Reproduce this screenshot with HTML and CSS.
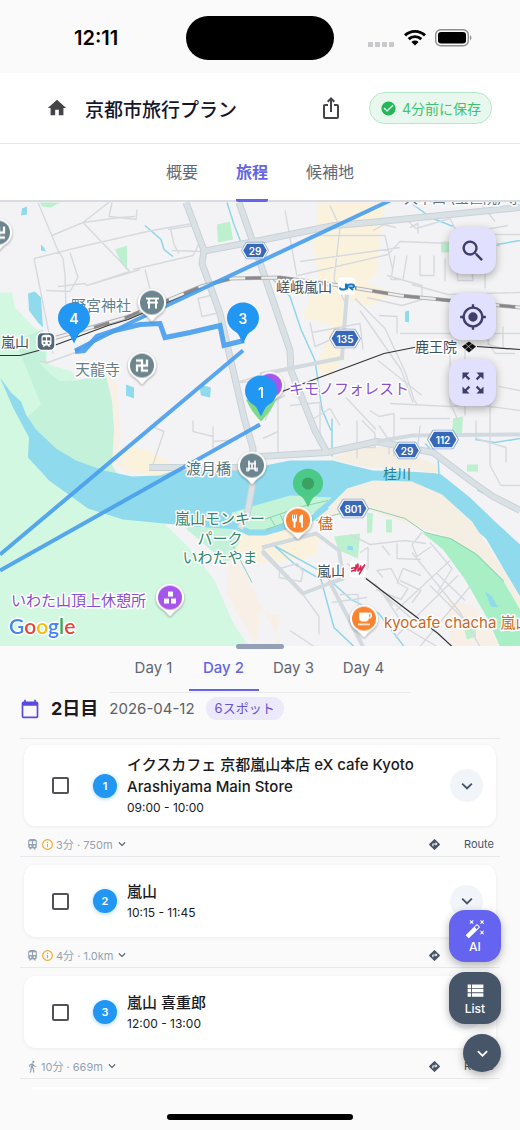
FILE: index.html
```html
<!DOCTYPE html>
<html lang="ja">
<head>
    <meta charset="UTF-8">
    <meta name="viewport" content="width=device-width, initial-scale=1.0">
    <title>京都市旅行プラン</title>
    <link rel="stylesheet" href="styles.css">
</head>
<body>
<!-- Shared icons -->
<svg class="sprite" aria-hidden="true">
    <symbol id="chevron" viewBox="0 0 24 24"><path d="M7.4 8.6 12 13.2l4.600-4.600L18 10l-6 6-6-6z"/></symbol>
    <symbol id="train" viewBox="0 0 24 24"><path fill-rule="evenodd" d="M12 2C7 2 4 2.600 4 6v9.500C4 17.400 5.600 19 7.500 19L6 20.500V21h2.500l2-2h3l2 2H18v-.5L16.500 19c1.900 0 3.500-1.600 3.500-3.500V6c0-3.400-3-4-8-4zM6 6v5h5V6zm7 0v5h5V6zM8.500 13.500a1.600 1.600 0 1 0 0 3.200 1.600 1.600 0 0 0 0-3.200zm7 0a1.600 1.600 0 1 0 0 3.200 1.600 1.600 0 0 0 0-3.200z"/></symbol>
    <symbol id="info" viewBox="0 0 24 24"><path fill-rule="evenodd" d="M12 2a10 10 0 1 0 0 20 10 10 0 0 0 0-20zm0 2a8 8 0 1 1 0 16 8 8 0 0 1 0-16zM11 7h2v2h-2zm0 4h2v6h-2z"/></symbol>
    <symbol id="walk" viewBox="0 0 24 24"><path d="M13.500 5.500a2 2 0 1 0 0-4 2 2 0 0 0 0 4zM9.800 8.900 7 23h2.100l1.800-8 2.100 2v6h2v-7.500l-2.100-2 .6-3C14.800 12 16.800 13 19 13v-2c-1.900 0-3.500-1-4.300-2.400l-1-1.600c-.4-.6-1-1-1.700-1-.3 0-.5.100-.8.100L6 8.300V13h2V9.600z"/></symbol>
    <symbol id="directions" viewBox="0 0 24 24"><path fill-rule="evenodd" d="m21.700 11.300-9-9a1 1 0 0 0-1.400 0l-9 9a1 1 0 0 0 0 1.400l9 9a1 1 0 0 0 1.400 0l9-9a1 1 0 0 0 0-1.400zM14 14.500V12h-4v3H8v-4a1 1 0 0 1 1-1h5V7.500l3.500 3.500z"/></symbol>
    <symbol id="pin" viewBox="0 0 34 44"><path d="M17 1C8 1 1 8 1 16.500c0 7 4.500 11.500 9.500 14.500 2.500 2 4 6 6.500 11 2.500-5 4-9 6.500-11 5-3 9.500-7.500 9.500-14.500C33 8 26 1 17 1z"/></symbol>
    <symbol id="poi" viewBox="0 0 32 36"><path fill="#fff" d="M16 1A14 14 0 0 0 6 25c3 2 6 4 8 7q2 3 4 0c2-3 5-5 8-7A14 14 0 0 0 16 1z"/><circle cx="16" cy="15" r="12"/></symbol>
    <symbol id="shield" viewBox="0 0 32 20"><path fill="#fff" stroke="#6f92cc" stroke-width=".8" d="M6 .5h20l5.500 9.500-5.500 9.500H6L.5 10z"/><path fill="#3769bb" d="M7 2.300h18l4.500 7.700-4.500 7.700H7L2.500 10z"/></symbol>
    <symbol id="manji" viewBox="0 0 14 14"><path fill="none" stroke="#fff" stroke-width="2.300" d="M1 2h6v10h6M2 13V7h10V1"/></symbol>
</svg>

<div class="app">
    <div class="status-bar">
        <span class="clock">12:11</span>
        <span class="island"></span>
        <span class="signals">
            <svg class="dots" viewBox="0 0 27 5"><path d="M0 0h5v5H0zM7 0h5v5H7zM14 0h5v5h-5zM21 0h5v5h-5z"/></svg>
            <svg class="wifi" viewBox="0 0 22 16"><path d="M11 0C6.700 0 2.900 1.600 0 4.300l2 2.100a13 13 0 0 1 18 0l2-2.100C19.100 1.600 15.300 0 11 0zM3.700 8.100l2 2.100a7.600 7.600 0 0 1 10.600 0l2-2.100a10.500 10.500 0 0 0-14.600 0zM7.400 11.900 11 15.600l3.600-3.700a5.200 5.200 0 0 0-7.200 0z"/></svg>
            <svg class="battery" viewBox="0 0 37 18"><rect x=".7" y=".7" width="32.600" height="16" rx="5" fill="none" stroke="#8e8e90" stroke-width="1.400"/><rect x="3" y="3" width="28" height="11.500" rx="3"/><path fill="#8e8e90" d="M35 6q3 2.800 0 5.500z"/></svg>
        </span>
    </div>

    <header class="top-bar">
        <a class="home" href="#" aria-label="ホーム"><svg viewBox="0 0 24 24"><path d="M10 20v-6h4v6h5v-8h3L12 3 2 12h3v8z"/></svg></a>
        <h1>京都市旅行プラン</h1>
        <button class="share" aria-label="共有"><svg viewBox="0 0 24 24"><path d="m16 5-1.400 1.400-1.600-1.600V16h-2V4.800L9.400 6.400 8 5l4-4zm4 5v11a2 2 0 0 1-2 2H6a2 2 0 0 1-2-2V10c0-1.100.9-2 2-2h3v2H6v11h12V10h-3V8h3a2 2 0 0 1 2 2z"/></svg></button>
        <span class="saved">
            <svg viewBox="0 0 24 24"><path fill-rule="evenodd" d="M12 2a10 10 0 1 0 0 20 10 10 0 0 0 0-20zm-2 15-5-5 1.400-1.400 3.600 3.600 7.600-7.600L19 8z"/></svg>
            4分前に保存
        </span>
    </header>

    <nav class="main-tabs">
        <a href="#">概要</a>
        <a href="#" class="active">旅程</a>
        <a href="#">候補地</a>
    </nav>

    <section class="map" aria-label="地図">
        <svg class="map-canvas" viewBox="0 201 520 445" preserveAspectRatio="xMidYMid slice">
            <rect x="0" y="201" width="520" height="445" fill="#f3f3f5"/>
            <!-- Built-up areas -->
            <path fill="#fbf2de" d="M317 202h67v26h-67zM340 227h41l-4 44-10 12 30 10-28 13-20-7-16 26-30-8 15-42-6-35zM333 309l14 4-2 44-15 18-15-6 12-30zM120 446l27 3 30 17 16 4-22 8-48-8zM262 547l48 4-6 8-44-1zM240 532l40-5 40 7-4 20-50 10-40-14z"/>
            <path fill="#f8f0e6" d="M108 376l9 8 4 50-4 20 10 16-17-7zM163 503l52 35 14 20-3 35 31 53h25l-38-75-24-30 20-30zM448 600l28 6 24 40h-50zM260 610l20 5-5 31h-18z"/>
            <!-- Hills and parks -->
            <path fill="#d3f8e2" d="M0 292h12l3 15 20 21 12 6v20l-2 12 7 20 40 5 25 90 45 40 26 25 26 33 20 45 25 37H0z"/>
            <path fill="#c3f1d9" d="M15 340l28-11 3 31 14 19 14 1 32-5 6 25 2 30-2 35 8 12-44-12-36-21-17-23 18-17z"/>
            <path fill="#c3f1d9" d="M175 506l70 1-6 36-12 20-40-34z"/>
            <path fill="#d3f8e2" d="M38 361l34 10 4 8-16 2-10-8z"/>
            <path fill="#bdf0cf" d="M115 249l12-4v25l-6-8zM217 224l13-3 3 18-15 3zM441 241h8v11h-8zM453 418l10-2-1 18-10-2zM467 464h11v7h-11zM367 512l6 1-1 19-5 1zM386 519h6v13h-6zM334 536l26-3-2 25-19-8zM463 625l13 3v8l-9 3zM40 202h20l-9 5-9-1z"/>
            <!-- River -->
            <path fill="#90daee" d="M0 377l11 15 10 9 5 13 10 15 20 19 20 12 28 10 28 6 28-1 20-7 18-3 62 1 30-6h43l15 4 25 6 35 1 32 2 30 24 25 24 25 23v52l-16-27-18-31-31-26-28-13-30-5h-24l-18 7-20 13-40-4-36 9-22 10-42-3-72-7-35-11-39-28-21-23 1-20-16-30z"/>
            <path fill="#f5efe3" d="M331 458l22-9 32-3 23 7 30 12 4 9-34-6-36-1-22-4zM300 519l27-11 20-20 26-8 39 1 30 13 30 27 35 54 13 21v14l-14-27-30-30-35-19-42-14-29-10z"/>
            <path fill="#a8efc6" d="M422 532l30 6 26 16 24 24 18 31v37h-20l-13-29-22-38-22-30z"/>
            <path fill="#c3f4d7" d="M232 512l30-9 28-8 42 2-18 15-34 14-22 5-24-4z"/>
            <path fill="none" stroke="#90daee" stroke-width="6" d="M227 521l22 11h16l25-7 22-7 15-12"/>
            <path fill="#90daee" d="M28 293l7-2 6 6 2 30-5-5-9-12zM22 208l5-2v8l-6 1zM41 244l3 3 2 4-5-1zM126 384l8 3v11l-8-3zM200 389l3-4 8 2-1 10-9-2zM405 311l4-1v12l-4-1zM480 486l7 4-3 4-7-4zM485 591l7 5 6 11-7-1zM348 545l5 1v4l-6-1z"/>
            <g fill="none" stroke="#90d6e8" stroke-width="1.500">
                <path d="M145 225l16 14 3 10 9 7M227 202l7 22 7 18M413 204l18 13 22 9M497 244l23-4"/>
                <path d="M270 276l20 20 11 33 14 31 7 49 9 21M332 418v38M274 545l21 19 26 15 13 48 20 19M274 545l44 24 33 30 28 14 25 33M425 443l13 13 1 18M475 439l20 3 25-4"/>
            </g>
            <!-- Small streets -->
            <g fill="none" stroke="#d6dade" stroke-width="1.400" stroke-linejoin="round">
                <path d="M38 202l20 48 5 8 2 16 1 38M34 258l52-13 66-15 46-8M34 258l11 55 8 40M52 235l31-13 32-25M83 222l37-5 15-1M112 202l-3 14 27 3 1-10M83 222l47 49M133 269l60-14 7-14M58 286l27-3 2 2 53-16M70 252l8 25-8 14-24-1M87 285l43-14M145 269l10 39M39 361l9 1 30-11"/>
                <path d="M170 226l4 18 5 9M168 229l25-4M172 250l32 1M198 298l16-4 6 18-18 4zM234 383l25-8M240 382l20-2M150 425l14 6-12 36h45M193 420v11l20 5v13M213 426v15l25-2"/>
                <path d="M285 210l12 66M330 205l10 22-6 52 12 25M310 235h75l8 36M298 275l90-21 12-13 100 4M300 261l100-14M395 255l-4 24h12l4-24M420 255v20h14v-20M445 258v23M455 255l3 25h15l-3-27M485 255v33M387 275l35 10v14l-20 6-35-8M312 332l48-9 3 26M310 322l5 24 14-6M345 333h12M379 315l18 1v17M400 333h120M412 284l36 10 72-2M460 300l3 33h20l12 20h20M492 316l-4 28 15 4v-22"/>
                <path d="M373 230l11-6 12 3M405 218l11 10 34-10 8 16 50-9M410 227l8-4v10M480 202l15 19M490 234h30"/>
                <path d="M355 298l30 30 20 43 9 28 3 5M360 310l41 59 12 33M346 397l30 32M378 360l44 35M450 344v58M390 403l60 3 25-2 45 6M465 345v70M490 400v65l11 20h19M499 386l21 4M370 410l9 6 15-3v43M362 420l13 13v14h-15"/>
                <path d="M265 420l10-20 10-5M263 438l15-7v21M278 399v53M290 405l30-3v42M314 418l16-10 10 17M357 420v38M379 425l10 15v14M420 425l-3 30M450 402l8 18M476 420v18l30 9v15M400 418h50"/>
                <path d="M350 534l20 10 35-4 21 3M360 552l8-5v20l-12 8M382 545l8 10M397 543v15l24 1M422 532l-10 12 5 12 14-10M430 542l22 26-15 25M450 560l-54 50M458 575l-63 62M470 586l-50 60M412 552l48 60 20 34M400 580l21 10-9 12M421 575l-18-7-6 15M383 577l-6-7 14-2 8 15 9 5-7 11-25-10M375 583l18 22M347 563l33 26 25 38 32 19M280 568l17-5 6 8-2 10-22-4zM332 602l35-5M340 594h18v12M290 630l24 16M262 553l41 41 16 22v18M379 590l42 36M430 585l33 33M437 573l28 27"/>
            </g>
            <!-- Main roads -->
            <g fill="none" stroke="#c9d2d8" stroke-width="7" stroke-linejoin="round">
                <path d="M186 202l18 48-2 13 18 50 24 104 9 31-1 39-5 28-7 13M202 251l58-11M260 240l74-15 36-3 150-15M239 202l21 60 30 88 1 20 24 60 13 24"/>
                <path d="M149 467h93l18-11 67-4 50-11 5 1 51 10 40 30 20 14 27 14"/>
            </g>
            <g fill="none" stroke="#dae1e5" stroke-width="5" stroke-linejoin="round">
                <path d="M186 202l18 48-2 13 18 50 24 104 9 31-1 39-5 28-7 13M202 251l58-11M260 240l74-15 36-3 150-15M239 202l21 60 30 88 1 20 24 60 13 24"/>
                <path d="M149 467h93l18-11 67-4 50-11 5 1 51 10 40 30 20 14 27 14"/>
            </g>
            <path fill="none" stroke="#d2dae0" stroke-width="4" stroke-linejoin="round" d="M347 292l-5 65M260 374l84-17M377 441l35-6 108-1M262 547l54-14 23 17 4 28-14 5-26 10-41-43M329 580l34 66"/>
            <path fill="none" stroke="#8fcfb2" d="M264 519l38-13 26-6M266 529l34-12M270 517l5 8M280 514l4 8M290 511l4 7M370 508l35 10 20 14 25 6 25 15 29 28M230 540l22 42M316 520l20-6 34-6"/>
            <!-- Railways -->
            <path fill="none" stroke="#b4b4b6" stroke-width="4" d="M46 340l80-23 75-31 30-8 49-1 60 8 60 10 120 12"/>
            <path fill="none" stroke="#f0f0f0" stroke-width="2" d="M46 340l80-23 75-31 30-8 49-1 60 8 60 10 120 12"/>
            <path fill="none" stroke="#8a8a8c" stroke-width="3" stroke-dasharray="16 16" d="M94 327l32-10 75-31 30-8 49-1 60 8 60 10 120 12"/>
            <path fill="none" stroke="#333" stroke-width="1.200" d="M0 355h20l26-7 62-23 20-6 73-31M274 394l110-41 35-7M477 346l43 3M366 578l72 55 14 13"/>

            <!-- Planned route -->
            <g fill="none" stroke="#4a9fee" stroke-width="4" stroke-opacity=".93">
                <path d="M0 554l243-204M0 570l260-146M75 350l60-30 255-120"/>
                <path stroke-width="5" d="M75 351l9-1 13-14 18-6 25-6 20-1 5 14 25-5 30-7 4 20 20-5"/>
            </g>

            <!-- Road numbers -->
            <g class="shields">
                <use href="#shield" x="241" y="240" width="28" height="20"/><text x="255" y="254">29</text>
                <use href="#shield" x="329" y="328" width="32" height="20"/><text x="345" y="342">135</text>
                <use href="#shield" x="393" y="440" width="28" height="20"/><text x="407" y="454">29</text>
                <use href="#shield" x="427" y="429" width="32" height="20"/><text x="443" y="443">112</text>
                <use href="#shield" x="337" y="498" width="32" height="20"/><text x="353" y="512">801</text>
            </g>

            <!-- Place names -->
            <g class="labels">
                <text x="71" y="310" fill="#64808c">野宮神社</text>
                <text x="75" y="374" fill="#64808c">天龍寺</text>
                <text x="186" y="473" fill="#56747b">渡月橋</text>
                <text class="station" x="1" y="346">嵐山</text>
                <text class="station" x="276" y="291">嵯峨嵐山</text>
                <text class="station" x="415" y="351">鹿王院</text>
                <text class="station" x="317" y="575">嵐山</text>
                <text x="289" y="393" fill="#8a4fd0">キモノフォレスト</text>
                <text x="11" y="605" fill="#8a4fd0">いわた山頂上休憩所</text>
                <text x="220" y="523" text-anchor="middle" fill="#32886a">嵐山モンキー</text>
                <text x="220" y="543" text-anchor="middle" fill="#32886a">パーク</text>
                <text x="220" y="562" text-anchor="middle" fill="#32886a">いわたやま</text>
                <text x="318" y="528" fill="#d0651d">儘</text>
                <text x="384" y="627" fill="#cc661f">kyocafe chacha 嵐山</text>
                <text class="river-name" x="383" y="478">桂川</text>
                <text class="cut" x="404" y="202">大本山 (宝筐院) 寺</text>
            </g>

            <!-- Stations -->
            <rect x="338" y="277" width="17" height="17" rx="3" fill="#fff"/>
            <path fill="none" stroke="#1678c5" stroke-width="2" d="M340 287q0 2 2 2h2q2 0 2-2v-4M347 289v-2q0-3 3-3h2q2 0 2 1.500t-2 1.500h-2l3 2.500"/>
            <rect x="350" y="560" width="16" height="17" rx="3" fill="#fff"/>
            <path fill="none" stroke="#d52d55" stroke-width="1.500" d="M351 568l4-1v4l3-8v8l3-6-1 5 5-6M356 564v6M351 571l5-2M359 574l6-10"/>
            <path fill="#111" d="M469 341l7 5-7 6-7-6z"/>
            <path stroke="#fff" stroke-width=".6" d="M465 343l7 6M472 343l-7 6"/>
            <rect x="37" y="332" width="18" height="18" rx="5" fill="#52667a" stroke="#fff" stroke-width="1.500"/>
            <use href="#train" x="39" y="333" width="15" height="15" fill="#fff"/>

            <!-- Points of interest -->
            <g class="pois">
                <use href="#poi" x="-18" y="217" width="32" height="36" fill="#6c858e"/><use href="#manji" x="-8" y="225" width="14" height="14"/>
                <use href="#poi" x="136" y="287" width="32" height="36" fill="#6c858e"/>
                <path fill="none" stroke="#fff" stroke-width="2" d="M146 298h13M147 302h11M149 298v10M156 298v10"/>
                <use href="#poi" x="126" y="350" width="32" height="36" fill="#6c858e"/><use href="#manji" x="135" y="358" width="14" height="14"/>
                <use href="#poi" x="236" y="450" width="32" height="36" fill="#6c858e"/>
                <path fill="none" stroke="#fff" stroke-width="1.600" d="M246 468h12M248 463h8M249 460v10M255 460v10M252 463v5M246 470h3M255 470h3"/>
                <use href="#poi" x="154" y="582" width="32" height="36" fill="#a855ee"/>
                <path fill="#fff" d="M168 591h5v5h-5zM164 598h5v5h-5zM171 598h5v5h-5z"/>
                <use href="#poi" x="282" y="505" width="32" height="36" fill="#fa8330"/>
                <path fill="#fff" d="M292 514h1v4h1v-4h1v4h1v-4h1v5q0 2-1.500 2.500V527h-2v-5.500q-1.500-.5-1.500-2.500zM303 514v13h-2v-5h-2v-5q1-3 4-3z"/>
                <use href="#poi" x="348" y="603" width="32" height="36" fill="#fa8330"/>
                <path fill="#fff" fill-rule="evenodd" d="M359 612h11q2 0 2 3t-3 3q-1 3-4 3h-2q-4 0-4-4zm10 1.500v3q1.500 0 1.500-1.500t-1.500-1.500zM358 623h12v1.500h-12z"/>
                <use href="#poi" x="254" y="370" width="32" height="36" fill="#a855ee"/>
            </g>
            <use href="#pin" x="292" y="466" width="32" height="44" fill="#43c67b" fill-opacity=".9"/>
            <circle cx="308" cy="483" r="6" fill="#3aa064"/>
            <path fill="#7fd98a" d="M246 399q5 12 15 22 10-10 15-22z"/>

            <!-- Numbered stops -->
            <g class="stops">
                <use href="#pin" x="57" y="301" width="34" height="44"/><text x="74" y="323">4</text>
                <use href="#pin" x="226" y="301" width="34" height="44"/><text x="243" y="323">3</text>
                <use href="#pin" x="244" y="374" width="34" height="44"/><text x="261" y="397">1</text>
            </g>
            <text class="google" x="9" y="633"><tspan fill="#4285f4">G</tspan><tspan fill="#ea4335">o</tspan><tspan fill="#fbbc05">o</tspan><tspan fill="#4285f4">g</tspan><tspan fill="#34a853">l</tspan><tspan fill="#ea4335">e</tspan></text>
        </svg>

        <div class="map-tools">
            <button aria-label="検索"><svg viewBox="0 0 24 24"><path d="M15.500 14h-.8l-.3-.3A6.500 6.500 0 1 0 13.700 14.400l.3.300v.8l5 5 1.500-1.500zm-6 0a4.500 4.500 0 1 1 0-9 4.500 4.500 0 0 1 0 9z"/></svg></button>
            <button aria-label="現在地"><svg viewBox="0 0 24 24"><path fill-rule="evenodd" d="M12 8a4 4 0 1 0 0 8 4 4 0 0 0 0-8zm9 3a9 9 0 0 0-8-8V1h-2v2a9 9 0 0 0-8 8H1v2h2a9 9 0 0 0 8 8v2h2v-2a9 9 0 0 0 8-8h2v-2zm-9 8a7 7 0 1 1 0-14 7 7 0 0 1 0 14z"/></svg></button>
            <button aria-label="全体表示"><svg viewBox="0 0 24 24"><path d="m15 3 2.300 2.300-2.900 2.900 1.400 1.400 2.900-2.900L21 9V3zM3 9l2.300-2.300 2.900 2.900 1.400-1.400-2.900-2.900L9 3H3zm6 12-2.300-2.300 2.900-2.900-1.400-1.400-2.900 2.900L3 15v6zm12-6-2.300 2.300-2.900-2.900-1.400 1.400 2.900 2.900L15 21h6z"/></svg></button>
        </div>
        <span class="drag-handle"></span>
    </section>

    <main class="plan">
        <nav class="day-tabs">
            <a href="#">Day 1</a>
            <a href="#" class="active">Day 2</a>
            <a href="#">Day 3</a>
            <a href="#">Day 4</a>
        </nav>

        <div class="day-header">
            <svg viewBox="0 0 24 24"><path d="M20 3h-1V1h-2v2H7V1H5v2H4a2 2 0 0 0-2 2v16a2 2 0 0 0 2 2h16a2 2 0 0 0 2-2V5a2 2 0 0 0-2-2zm0 18H4V8h16z"/></svg>
            <h2>2日目</h2>
            <time datetime="2026-04-12">2026-04-12</time>
            <span class="count">6スポット</span>
        </div>

        <ol class="stops-list">
            <li>
                <article class="card">
                    <input type="checkbox" aria-label="イクスカフェ 京都嵐山本店を選択">
                    <span class="number">1</span>
                    <div class="info"><h3>イクスカフェ 京都嵐山本店 eX cafe Kyoto Arashiyama Main Store</h3><p>09:00 - 10:00</p></div>
                    <button class="expand" aria-label="詳細"><svg><use href="#chevron"/></svg></button>
                </article>
                <div class="transit">
                    <button class="mode"><svg><use href="#train"/></svg><svg class="warn"><use href="#info"/></svg><span>3分 · 750m</span><svg class="more"><use href="#chevron"/></svg></button>
                    <a class="route" href="#"><svg><use href="#directions"/></svg>Route</a>
                </div>
            </li>
            <li>
                <article class="card">
                    <input type="checkbox" aria-label="嵐山を選択">
                    <span class="number">2</span>
                    <div class="info"><h3>嵐山</h3><p>10:15 - 11:45</p></div>
                    <button class="expand" aria-label="詳細"><svg><use href="#chevron"/></svg></button>
                </article>
                <div class="transit">
                    <button class="mode"><svg><use href="#train"/></svg><svg class="warn"><use href="#info"/></svg><span>4分 · 1.0km</span><svg class="more"><use href="#chevron"/></svg></button>
                    <a class="route" href="#"><svg><use href="#directions"/></svg>Route</a>
                </div>
            </li>
            <li>
                <article class="card">
                    <input type="checkbox" aria-label="嵐山 喜重郎を選択">
                    <span class="number">3</span>
                    <div class="info"><h3>嵐山 喜重郎</h3><p>12:00 - 13:00</p></div>
                    <button class="expand" aria-label="詳細"><svg><use href="#chevron"/></svg></button>
                </article>
                <div class="transit">
                    <button class="mode"><svg><use href="#walk"/></svg><span>10分 · 669m</span><svg class="more"><use href="#chevron"/></svg></button>
                    <a class="route" href="#"><svg><use href="#directions"/></svg>Route</a>
                </div>
            </li>
        </ol>
        <div class="next-card"></div>
    </main>

    <div class="fabs">
        <button class="fab ai"><svg viewBox="0 0 24 24"><path fill-rule="evenodd" d="M7.500 5.600 10 7 8.600 4.500 10 2 7.500 3.400 5 2l1.400 2.500L5 7zm12 9.800L17 14l1.400 2.500L17 19l2.500-1.400L22 19l-1.400-2.500L22 14zM22 2l-2.500 1.400L17 2l1.400 2.500L17 7l2.500-1.400L22 7l-1.400-2.500zm-7.600 5.300a1 1 0 0 0-1.400 0L1.300 19a1 1 0 0 0 0 1.400l2.300 2.300a1 1 0 0 0 1.400 0L16.700 11a1 1 0 0 0 0-1.400zm-1.100 5.500-2.100-2.100 2.400-2.500 2.200 2.200z"/></svg>AI</button>
        <button class="fab list"><svg viewBox="0 0 24 24"><path d="M3 14h4v-4H3zm0 5h4v-4H3zM3 9h4V5H3zm5 5h13v-4H8zm0 5h13v-4H8zM8 5v4h13V5z"/></svg>List</button>
        <button class="fab down" aria-label="下へ"><svg><use href="#chevron"/></svg></button>
    </div>

    <footer class="home-bar"><span></span></footer>
</div>
</body>
</html>
```
FILE: styles.css
```css
* {
    box-sizing: border-box;
}
body {
    margin: 0;
    background: #fafafa;
    color: #1a1a22;
    font-family: Inter, "Noto Sans CJK JP", sans-serif;
}
h1, h2, h3, p, ol {
    margin: 0;
    padding: 0;
}
a {
    color: inherit;
    text-decoration: none;
}
button {
    padding: 0;
    border: 0;
    background: none;
    font-family: inherit;
    color: inherit;
    cursor: pointer;
}
svg {
    display: block;
    fill: currentColor;
}
.sprite {
    position: absolute;
    width: 0;
    height: 0;
}
.app {
    position: relative;
    display: flex;
    flex-direction: column;
    min-height: 100vh;
    overflow: hidden;
}

/* Status bar */
.status-bar {
    display: grid;
    grid-template-columns: 1fr 148px 1fr;
    align-items: center;
    height: 73px;
    padding: 3px 48px 0;
    color: #000;
}
.clock {
    padding-left: 26px;
    font-size: 20px;
    font-weight: 600;
}
.island {
    height: 44px;
    border-radius: 22px;
    background: #000;
}
.signals {
    display: flex;
    align-items: center;
    justify-content: flex-end;
    gap: 9px;
}
.dots {
    width: 27px;
    height: 5px;
    margin-top: 12px;
    color: #c9c9cb;
}
.wifi {
    width: 22px;
    height: 16px;
}
.battery {
    width: 37px;
    height: 18px;
}

/* Title row */
.top-bar {
    display: flex;
    align-items: center;
    height: 71px;
    padding: 0 28px 0 46px;
    background: #fff;
    border-bottom: 1px solid #e2e5ea;
}
.home, .share {
    color: #444448;
}
.home svg {
    width: 22px;
    height: 22px;
}
.share svg {
    width: 24px;
    height: 24px;
}
.top-bar h1 {
    flex: 1;
    padding-left: 17px;
    font-size: 19px;
    font-weight: 500;
    color: #14162b;
}
.saved {
    display: flex;
    align-items: center;
    gap: 5px;
    height: 32px;
    margin-left: 26px;
    padding: 0 10px;
    border: 1px solid #b5e8c8;
    border-radius: 16px;
    background: #e9f8ef;
    color: #3cc46e;
    font-size: 14px;
}
.saved svg {
    width: 17px;
    height: 17px;
    color: #22b857;
}

/* Main tabs */
.main-tabs {
    display: flex;
    justify-content: center;
    gap: 38px;
    height: 58px;
    background: #fff;
    border-bottom: 2px solid #d9dae2;
    color: #5f6b7a;
    font-size: 16px;
    line-height: 56px;
}
.main-tabs .active {
    height: 58px;
    border-bottom: 3px solid #6464e4;
    border-radius: 2px;
    color: #6464e4;
    font-weight: 700;
}

/* Map */
.map {
    position: relative;
    height: 444px;
}
.map-canvas {
    width: 100%;
    height: 100%;
}
.shields text {
    fill: #fff;
    font-size: 10px;
    font-weight: 600;
    text-anchor: middle;
}
.labels text {
    font-size: 15px;
    paint-order: stroke;
    stroke: #fff;
    stroke-width: 3px;
    stroke-linejoin: round;
}
.labels .station {
    fill: #3e515f;
    font-size: 14px;
}
.labels .river-name {
    fill: #23848f;
    font-size: 14px;
    stroke: none;
}
.labels .cut {
    fill: #647480;
    font-size: 14px;
}
.pois {
    filter: drop-shadow(0 1px 1px rgba(0, 0, 0, 0.35));
}
.stops {
    fill: #2196f3;
}
.stops text {
    fill: #fff;
    font-size: 14px;
    font-weight: 600;
    text-anchor: middle;
}
.google {
    font-family: Lato, sans-serif;
    font-size: 21px;
    font-weight: 600;
    paint-order: stroke;
    stroke: #fff;
    stroke-width: 3px;
}
.map-tools {
    position: absolute;
    top: 25px;
    right: 24px;
    display: flex;
    flex-direction: column;
    gap: 19px;
}
.map-tools button {
    display: grid;
    place-items: center;
    width: 47px;
    height: 47px;
    border-radius: 13px;
    background: #e1e0ff;
    color: #3f3d69;
    box-shadow: 0 3px 8px rgba(0, 0, 0, 0.3);
}
.map-tools svg {
    width: 28px;
    height: 28px;
}
.drag-handle {
    position: absolute;
    bottom: -3px;
    left: 50%;
    width: 48px;
    height: 5px;
    margin-left: -24px;
    border-radius: 3px;
    background: #94a0b8;
}

/* Day tabs */
.plan {
    flex: 1;
    padding: 0 20px;
}
.day-tabs {
    display: flex;
    justify-content: center;
    width: 300px;
    height: 47px;
    margin: 0 auto;
    padding-right: 3px;
    border-bottom: 1px solid #e8eaed;
    color: #5f6673;
    font-size: 15px;
    line-height: 44px;
    text-align: center;
}
.day-tabs a {
    width: 70px;
}
.day-tabs .active {
    height: 45px;
    border-bottom: 2px solid #6464e4;
    color: #6464e4;
    font-weight: 500;
}

/* Day heading */
.day-header {
    display: flex;
    align-items: center;
    gap: 11px;
    padding: 4px 0 18px;
    border-bottom: 1px solid #e6e8eb;
    line-height: 23px;
}
.day-header svg {
    width: 20px;
    height: 22px;
    color: #5a4be0;
}
.day-header h2 {
    font-size: 18px;
    font-weight: 700;
}
.day-header time {
    color: #5f6066;
    font-size: 15px;
}
.count {
    padding: 0 9px;
    border-radius: 12px;
    background: #ebe9fa;
    color: #6252ce;
    font-size: 13px;
}

/* Stops */
.stops-list {
    list-style: none;
}
.card {
    display: flex;
    align-items: center;
    min-height: 72px;
    margin: 8px 4px 0;
    padding: 8px 13px 8px 28px;
    border-radius: 12px;
    background: #fff;
    box-shadow: 0 1px 4px rgba(0, 0, 0, 0.06);
}
.stops-list li:first-child .card {
    margin-top: 6px;
}
.card input {
    appearance: none;
    flex: none;
    width: 17px;
    height: 17px;
    margin: 0 24px 0 0;
    border: 2px solid #525258;
    border-radius: 2px;
}
.number {
    flex: none;
    width: 24px;
    margin-right: 10px;
    border-radius: 50%;
    background: #2196f3;
    box-shadow: 0 1px 4px rgba(33, 150, 243, 0.4);
    color: #fff;
    font-size: 11px;
    font-weight: 600;
    line-height: 24px;
    text-align: center;
}
.info {
    flex: 1;
    padding: 1px 20px 0 0;
}
.info h3 {
    font-size: 15px;
    font-weight: 500;
    line-height: 22px;
}
.info p {
    font-size: 12px;
    line-height: 20px;
}
.expand {
    display: grid;
    place-items: center;
    width: 33px;
    height: 33px;
    border-radius: 50%;
    background: #f1f5f9;
    color: #475569;
}
.expand svg {
    width: 22px;
    height: 22px;
}

/* Travel between stops */
.transit {
    display: flex;
    align-items: center;
    justify-content: space-between;
    height: 31px;
    padding: 6px 6px 0;
    border-bottom: 1px solid #e6e8eb;
    color: #475569;
    font-size: 11px;
}
.mode, .route {
    display: flex;
    align-items: center;
}
.mode {
    gap: 2px;
    color: #94a3b0;
    font-size: 11px;
}
.mode svg, .route svg {
    width: 13px;
    height: 13px;
}
.mode .more {
    width: 14px;
    height: 14px;
    color: #475569;
}
.mode .warn {
    color: #f5a524;
}
.route {
    gap: 23px;
}
/* Top edge of the stop that is scrolled out of view */
.next-card {
    height: 3px;
    margin: 8px 12px 0;
    background: #fff;
}

/* Floating buttons */
.fabs {
    position: absolute;
    right: 19px;
    bottom: 58px;
    display: flex;
    flex-direction: column;
    align-items: flex-end;
    gap: 10px;
}
.fab {
    display: flex;
    flex-direction: column;
    align-items: center;
    justify-content: center;
    width: 52px;
    height: 52px;
    border-radius: 16px;
    background: #475569;
    box-shadow: 0 3px 8px rgba(0, 0, 0, 0.3);
    color: #fff;
    font-size: 12px;
    font-weight: 500;
    line-height: 15px;
}
.fab svg {
    width: 21px;
    height: 21px;
}
.fab.ai {
    background: #6464f1;
}
.fab.down {
    width: 38px;
    height: 38px;
    border-radius: 50%;
}

/* Bottom edge */
.home-bar {
    display: flex;
    justify-content: center;
    height: 39px;
    padding-top: 23px;
}
.home-bar span {
    width: 186px;
    height: 6px;
    border-radius: 3px;
    background: #000;
}
```
